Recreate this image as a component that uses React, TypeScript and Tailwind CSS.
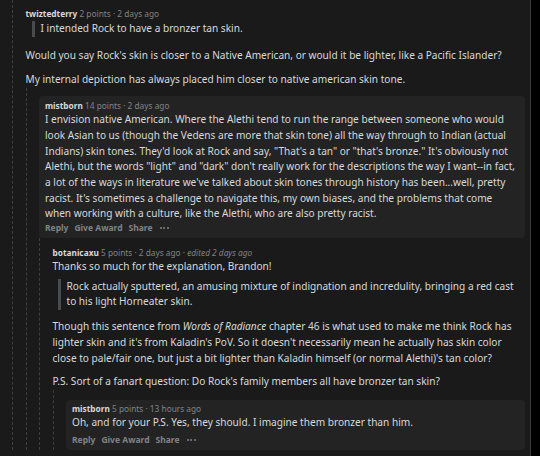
import React from "react";

const font = { fontFamily: '"Noto Sans", "Open Sans", sans-serif' };

function Meta({
  user,
  points,
  time,
  edited,
}: {
  user: string;
  points: string;
  time: string;
  edited?: string;
}) {
  return (
    <div className="text-[8.3px] leading-[12px] whitespace-nowrap">
      <span className="font-bold text-[#d7dadc]">{user}</span>
      <span className="text-[#818384]">
        {" "}
        {points} · {time}
      </span>
      {edited && (
        <span className="text-[#818384]">
          {" · "}
          <i>{edited}</i>
        </span>
      )}
    </div>
  );
}

function Dots() {
  return (
    <span className="flex items-center gap-[1.5px] ml-[1px]">
      <span className="w-[2px] h-[2px] rounded-full bg-[#818384]"></span>
      <span className="w-[2px] h-[2px] rounded-full bg-[#818384]"></span>
      <span className="w-[2px] h-[2px] rounded-full bg-[#818384]"></span>
    </span>
  );
}

function Actions() {
  return (
    <div className="flex items-center gap-[6px] text-[8.5px] leading-[12px] font-bold text-[#818384]">
      <span>Reply</span>
      <span>Give Award</span>
      <span>Share</span>
      <Dots />
    </div>
  );
}

function Quote({ children }: { children: React.ReactNode }) {
  return (
    <div className="border-l-[3px] border-[#4a4b4d] pl-[6px]">{children}</div>
  );
}

function Thread({ children }: { children: React.ReactNode }) {
  return (
    <div className="flex">
      <div className="w-[13.5px] shrink-0 border-l border-dashed border-[#3e3f41]"></div>
      <div className="min-w-0 flex-1">{children}</div>
    </div>
  );
}

export default function App() {
  return (
    <div className="w-[540px] h-[456px] bg-black overflow-hidden" style={font}>
      <div className="w-[531px] h-[456px] bg-[#1a1a1b] border-r border-[#3a3b3c] pl-3 pr-[5px] overflow-hidden text-[10.1px] leading-[15.7px] text-[#d7dadc]">
        <Thread>
          <div className="pt-[8px]">
            <Meta user="twiztedterry" points="2 points" time="2 days ago" />
            <div className="mt-[1px] ml-[6px]">
              <Quote>I intended Rock to have a bronzer tan skin.</Quote>
            </div>
            <p className="mt-[11px]">
              Would you say Rock's skin is closer to a Native American, or would it be
              lighter, like a Pacific Islander?
            </p>
            <p className="mt-[9px]">
              My internal depiction has always placed him closer to native american skin
              tone.
            </p>
          </div>
          <Thread>
            <div className="mt-[8px] rounded-[4px] bg-[#232324] px-[6px] pt-[4px] pb-[4px]">
              <Meta user="mistborn" points="14 points" time="2 days ago" />
              <p className="pr-[4px]">
                I envision native American. Where the Alethi tend to run the range between
                someone who would look Asian to us (though the Vedens are more that skin
                tone) all the way through to Indian (actual Indians) skin tones. They'd
                look at Rock and say, "That's a tan" or "that's bronze." It's obviously
                not Alethi, but the words "light" and "dark" don't really work for the
                descriptions the way I want--in fact, a lot of the ways in literature
                we've talked about skin tones through history has been...well, pretty
                racist. It's sometimes a challenge to navigate this, my own biases, and
                the problems that come when working with a culture, like the Alethi, who
                are also pretty racist.
              </p>
              <Actions />
            </div>
            <Thread>
              <div className="pt-[9px]">
                <Meta
                  user="botanicaxu"
                  points="5 points"
                  time="2 days ago"
                  edited="edited 2 days ago"
                />
                <p>Thanks so much for the explanation, Brandon!</p>
                <div className="mt-[4px] ml-[5px]">
                  <Quote>
                    Rock actually sputtered, an amusing mixture of indignation and
                    incredulity, bringing a red cast to his light Horneater skin.
                  </Quote>
                </div>
                <p className="mt-[9px] pr-[10px]">
                  Though this sentence from <i>Words of Radiance</i> chapter 46 is what
                  used to make me think Rock has lighter skin and it's from Kaladin's PoV.
                  So it doesn't necessarily mean he actually has skin color close to
                  pale/fair one, but just a bit lighter than Kaladin himself (or normal
                  Alethi)'s tan color?
                </p>
                <p className="mt-[8px]">
                  P.S. Sort of a fanart question: Do Rock's family members all have
                  bronzer tan skin?
                </p>
              </div>
              <Thread>
                <div className="mt-[10px] rounded-[4px] bg-[#232324] px-[6px] pt-[3px] pb-[4px]">
                  <Meta user="mistborn" points="5 points" time="13 hours ago" />
                  <p>
                    Oh, and for your P.S. Yes, they should. I imagine them bronzer than
                    him.
                  </p>
                  <div className="mt-[3px]">
                    <Actions />
                  </div>
                </div>
              </Thread>
            </Thread>
          </Thread>
        </Thread>
      </div>
    </div>
  );
}
